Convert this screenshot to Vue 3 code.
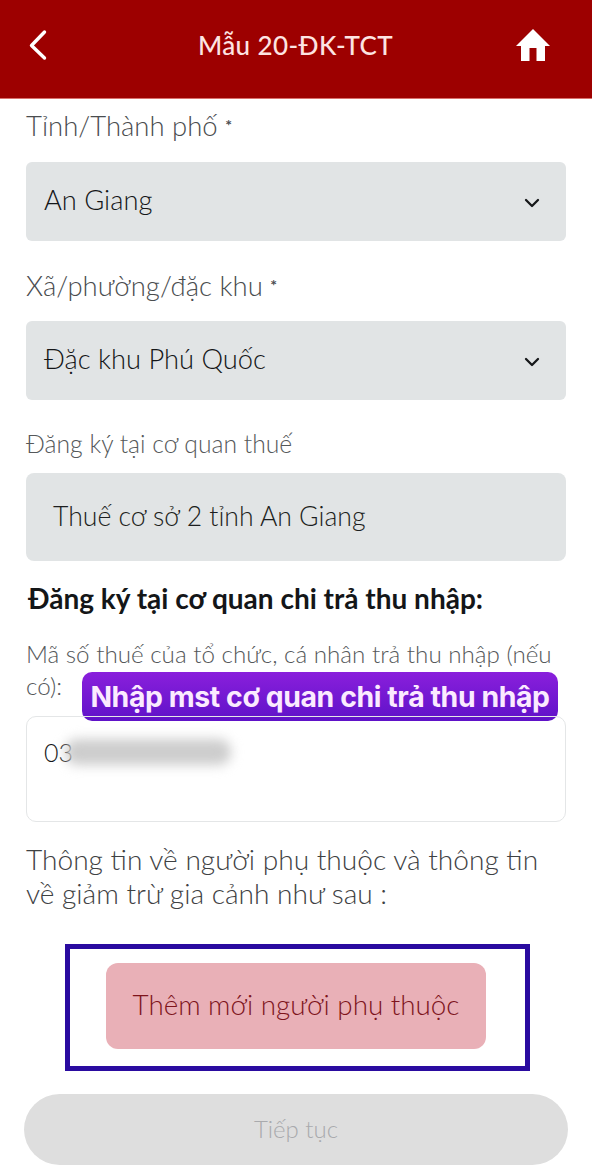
<script setup>
const fields = [
  { label: 'Tỉnh/Thành phố', value: 'An Giang' },
  { label: 'Xã/phường/đặc khu', value: 'Đặc khu Phú Quốc' },
]
</script>

<template>
  <div class="page">
    <header class="bar">
      <svg class="back" viewBox="0 0 20 32" width="20" height="32"><path d="M16.500 3 3.500 16.500 16.500 29" fill="none" stroke="#fff" stroke-width="3.400" stroke-linecap="round" stroke-linejoin="round"/></svg>
      <h1 class="title">Mẫu 20-ĐK-TCT</h1>
      <svg class="home" viewBox="0 0 34 32" width="34" height="32"><path d="M17 0 34 17h-5V32H20.500V19h-7V32H5V17H0Z" fill="#fff"/></svg>
    </header>

    <main class="body">
      <div v-for="f in fields" :key="f.label" class="field">
        <div class="label">{{ f.label }} <span class="star">*</span></div>
        <div class="select">
          <span>{{ f.value }}</span>
          <svg viewBox="0 0 16 10" width="16" height="10"><path d="M2 2 8 8 14 2" fill="none" stroke="#16181a" stroke-width="2.300" stroke-linecap="round" stroke-linejoin="round"/></svg>
        </div>
      </div>

      <div class="small-label">Đăng ký tại cơ quan thuế</div>
      <div class="tax-box">Thuế cơ sở 2 tỉnh An Giang</div>

      <h2 class="heading">Đăng ký tại cơ quan chi trả thu nhập:</h2>

      <div class="mst">
        <div class="small-label mst-label">Mã số thuế của tổ chức, cá nhân trả thu nhập (nếu</div>
        <div class="small-label mst-label">có):</div>
        <div class="badge">Nhập mst cơ quan chi trả thu nhập</div>
        <div class="input">
          <span>03</span>
          <i class="smudge"></i>
        </div>
      </div>

      <p class="info">Thông tin về người phụ thuộc và thông tin về giảm trừ gia cảnh như sau :</p>

      <div class="frame">
        <div class="add">Thêm mới người phụ thuộc</div>
      </div>

      <div class="next">Tiếp tục</div>
    </main>
  </div>
</template>

<style>
html, body { margin: 0; background: #fff; }
</style>

<style scoped>
.page {
  width: 592px;
  height: 1173px;
  overflow: hidden;
  background: #fff;
  font-family: "Lato", "Noto Sans", sans-serif;
  color: #2a2c2e;
}
.bar {
  height: 99px;
  background: #9d0000;
  display: flex;
  align-items: center;
  justify-content: space-between;
  padding: 0 42px 9px 28px;
  box-sizing: border-box;
  border-bottom: 1px solid #d9706c;
}
.title {
  margin: 0 0 0 27px;
  font-size: 26px;
  font-weight: 500;
  color: #fde4e2;
  letter-spacing: 0.4px;
}
.body { padding: 0 26px; }
.field { margin-bottom: 28px; }
.field:first-child { padding-top: 10px; }
.label {
  font-size: 27.500px;
  line-height: 32px;
  color: #4a4d4f;
  font-weight: 300;
  margin-bottom: 20px;
}
.field + .field .label { margin-bottom: 19px; }
.star { font-size: 16px; vertical-align: 5px; font-weight: 700; }
.select {
  height: 79px;
  box-sizing: border-box;
  border-radius: 6px;
  background: #e1e4e5;
  display: flex;
  align-items: center;
  justify-content: space-between;
  padding: 0 26px 4px 18px;
  font-size: 27.300px;
  font-weight: 300;
  color: #141618;
}
.select svg { position: relative; top: 3px; }
.small-label {
  font-size: 24.700px;
  line-height: 32px;
  color: #55585a;
  font-weight: 300;
}
.tax-box {
  height: 88px;
  box-sizing: border-box;
  margin-top: 13px;
  border-radius: 8px;
  background: #e1e4e5;
  display: flex;
  align-items: center;
  padding: 0 0 2px 27px;
  font-size: 26.600px;
  font-weight: 300;
  color: #1c1e20;
}
.heading {
  margin: 21px 0 0 2px;
  font-size: 28px;
  line-height: 32px;
  font-weight: 700;
  color: #141618;
  white-space: nowrap;
}
.mst { position: relative; margin-top: 24px; }
.mst .mst-label { width: fit-content; font-size: 24.200px; white-space: nowrap; }
.badge {
  position: absolute;
  left: 56px;
  top: 34px;
  width: 476px;
  height: 49px;
  box-sizing: border-box;
  border-radius: 10px;
  background: linear-gradient(#8a1fdc, #5f12c8);
  color: #fbeaff;
  font-family: "Inter", sans-serif;
  font-weight: 700;
  font-size: 28.400px;
  line-height: 49px;
  text-align: center;
  white-space: nowrap;
  letter-spacing: -0.4px;
}
.input {
  position: relative;
  height: 106px;
  margin-top: 14px;
  box-sizing: border-box;
  border: 1px solid #e4e6e7;
  border-radius: 10px;
  padding: 20px 17px;
  font-size: 25px;
  font-weight: 300;
  line-height: 30px;
  color: #141618;
}
.smudge {
  position: absolute;
  left: 38px;
  top: 22px;
  width: 166px;
  height: 26px;
  border-radius: 12px;
  background: #cdcdcd;
  filter: blur(6px);
}
.info {
  margin: 20px 0 0;
  font-size: 28.100px;
  line-height: 34px;
  color: #3e4143;
  font-weight: 300;
}
.frame {
  width: 465px;
  height: 127px;
  margin: 34px 0 0 39px;
  box-sizing: border-box;
  border: 5px solid #2a0ba0;
  padding: 14px 0 0 36px;
}
.add {
  width: 380px;
  height: 86px;
  box-sizing: border-box;
  padding-bottom: 3px;
  border-radius: 12px;
  background: #e9b0b7;
  color: #7e141c;
  font-size: 27.800px;
  display: flex;
  align-items: center;
  justify-content: center;
  font-weight: 300;
}
.next {
  width: 544px;
  height: 71px;
  box-sizing: border-box;
  padding-bottom: 3px;
  margin: 23px 0 0 -2px;
  border-radius: 36px;
  background: #dedede;
  color: #a9aaad;
  font-size: 24px;
  font-weight: 300;
  display: flex;
  align-items: center;
  justify-content: center;
}
</style>
